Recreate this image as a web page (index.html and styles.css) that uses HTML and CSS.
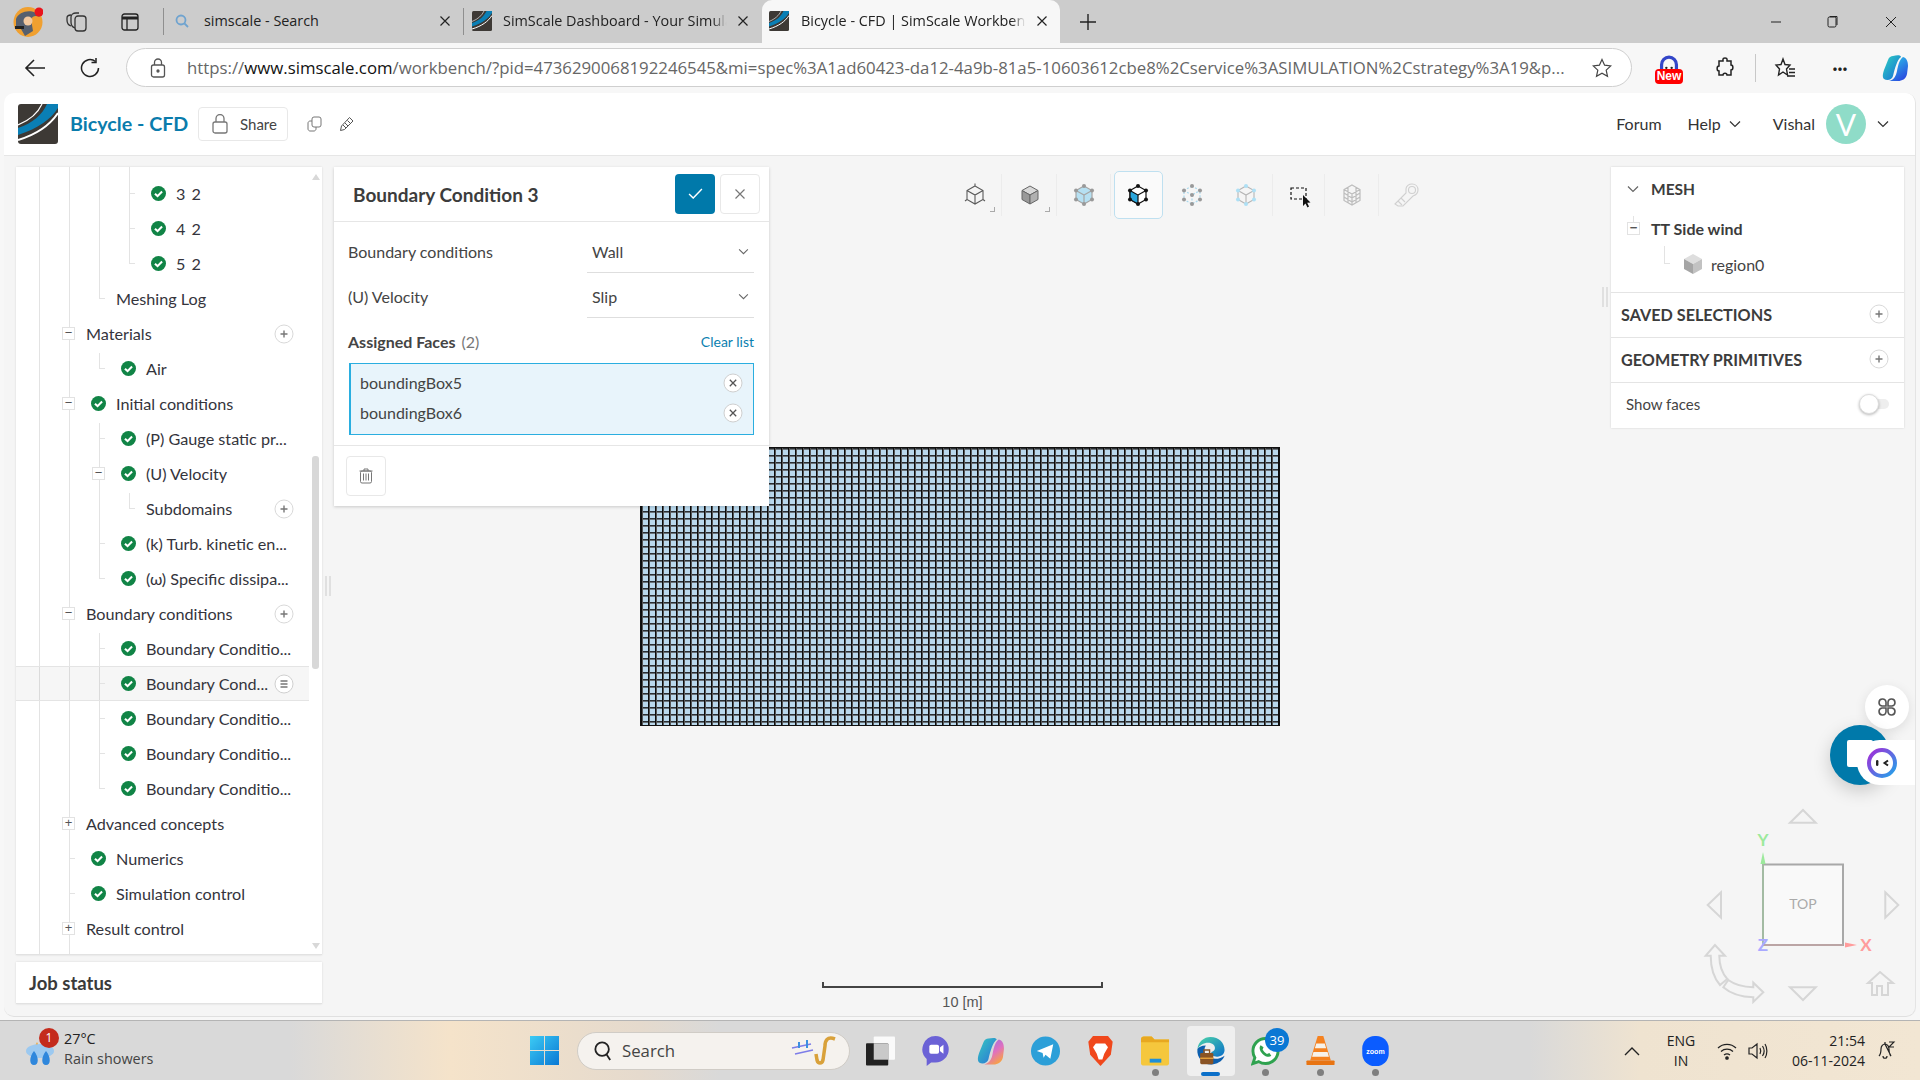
FILE: index.html
```html
<!DOCTYPE html>
<html lang="en">
<head>
    <meta charset="UTF-8">
    <title>Bicycle - CFD | SimScale Workbench</title>
    <link rel="stylesheet" href="styles.css">
</head>
<body>

    <!-- Shared icons -->
    <svg class="sprite" width="0" height="0">
        <symbol id="logo" viewBox="0 0 40 40">
            <rect width="40" height="40" rx="3" fill="#3d3935"/>
            <path d="M29 0H40V4C33 15 21 24 0 31V24C15 19 24 11 29 0Z" fill="#0a7fb5"/>
            <path d="M24 0C20 9 12 16 0 21" stroke="#fff" stroke-width="1.2" fill="none"/>
            <path d="M40 9C32 21 20 30 0 36" stroke="#fff" stroke-width="2" fill="none"/>
        </symbol>
        <symbol id="check" viewBox="0 0 16 16">
            <circle cx="8" cy="8" r="8" fill="#118446"/>
            <path d="M4.2 8.2L7 10.8L11.8 5.8" stroke="#fff" stroke-width="2.2" fill="none"/>
        </symbol>
        <symbol id="plus" viewBox="0 0 20 20">
            <circle cx="10" cy="10" r="9" fill="#fff" stroke="#d9d9d9"/>
            <path d="M6.5 10H13.5M10 6.5V13.5" stroke="#777" stroke-width="1.4"/>
        </symbol>
        <symbol id="chev" viewBox="0 0 12 8">
            <path d="M1 1.5L6 6.5L11 1.5" stroke="currentColor" stroke-width="1.2" fill="none"/>
        </symbol>
        <symbol id="close" viewBox="0 0 12 12">
            <path d="M1.5 1.5L10.5 10.5M10.5 1.5L1.5 10.5" stroke="currentColor" stroke-width="1.2"/>
        </symbol>
        <symbol id="chip-x" viewBox="0 0 20 20">
            <circle cx="10" cy="10" r="9" fill="#fff" stroke="#cfcfcf"/>
            <path d="M6.8 6.8L13.2 13.2M13.2 6.8L6.8 13.2" stroke="#555" stroke-width="1.3"/>
        </symbol>
    </svg>

    <!-- Browser tabs -->
    <div class="tabstrip">
        <svg class="profile" viewBox="0 0 30 30">
            <ellipse cx="15" cy="15" rx="14.5" ry="15" fill="#f0a030"/>
            <path d="M3 12C6 3 22 1 27 10C22 8 20 9 18 12L20 24L12 29L8 22L3 20Z" fill="#57606e"/>
            <circle cx="15" cy="14" r="4.5" fill="#f3c9a0"/>
            <rect x="2" y="19" width="9" height="3" fill="#222"/>
            <circle cx="26" cy="5" r="4.5" fill="#e8141c"/>
        </svg>
        <svg class="strip-icon collections" viewBox="0 0 22 20" fill="none" stroke="#333" stroke-width="1.3">
            <rect x="9" y="4" width="11" height="15" rx="3"/>
            <path d="M9 16C6 15 5 13 5 10V5C5 3 7 1 10 1H13"/>
            <path d="M5 14C2 13 1 11 1 8V6C1 4 3 3 5 3"/>
        </svg>
        <svg class="strip-icon vertical" viewBox="0 0 18 18" fill="none" stroke="#222" stroke-width="1.3">
            <rect x="1" y="1" width="16" height="16" rx="2.5"/>
            <path d="M1 5H17" stroke-width="3"/>
            <path d="M6 5V17"/>
        </svg>
        <div class="tab first">
            <svg class="tab-fav" viewBox="0 0 14 14" fill="none" stroke="#6fa3cf" stroke-width="1.8">
                <circle cx="6" cy="6" r="4.5"/><path d="M9.5 9.5L13 13"/>
            </svg>
            <span class="tab-title">simscale - Search</span>
            <svg class="tab-x"><use href="#close"/></svg>
        </div>
        <div class="tab second">
            <svg class="tab-logo"><use href="#logo"/></svg>
            <span class="tab-title fade">SimScale Dashboard - Your Simula</span>
            <svg class="tab-x"><use href="#close"/></svg>
        </div>
        <div class="tab active">
            <svg class="tab-logo"><use href="#logo"/></svg>
            <span class="tab-title fade">Bicycle - CFD | SimScale Workbenc</span>
            <svg class="tab-x"><use href="#close"/></svg>
        </div>
        <svg class="new-tab" viewBox="0 0 18 18"><path d="M9 1V17M1 9H17" stroke="#222" stroke-width="1.4"/></svg>
        <div class="win-controls">
            <svg viewBox="0 0 12 12"><path d="M1 6H11" stroke="#222"/></svg>
            <svg viewBox="0 0 12 12" fill="none" stroke="#222"><rect x="2" y="1" width="8" height="10" rx="1.5"/><path d="M4 1V0.5H11V9"/></svg>
            <svg viewBox="0 0 12 12"><path d="M1 1L11 11M11 1L1 11" stroke="#222"/></svg>
        </div>
    </div>

    <!-- Address bar -->
    <div class="addressbar">
        <svg class="nav-icon back" viewBox="0 0 22 20" fill="none" stroke="#222" stroke-width="1.6"><path d="M21 10H2M10 2L2 10L10 18"/></svg>
        <svg class="nav-icon reload" viewBox="0 0 20 20" fill="none" stroke="#222" stroke-width="1.5"><path d="M15.5 3.5A8.5 8.5 0 1 0 18.5 10"/><path d="M16 0V4.5H11.5"/></svg>
        <div class="urlbar">
            <svg class="url-lock" viewBox="0 0 16 20" fill="none" stroke="#555" stroke-width="1.3">
                <rect x="1.5" y="7" width="13" height="12" rx="2"/><path d="M4.5 7V4.5A3.5 3.5 0 0 1 11.5 4.5V7"/><circle cx="8" cy="13" r="1" fill="#555"/>
            </svg>
            <span class="url-text">https://<b>www.simscale.com</b>/workbench/?pid=4736290068192246545&amp;mi=spec%3A1ad60423-da12-4a9b-81a5-10603612cbe8%2Cservice%3ASIMULATION%2Cstrategy%3A19&amp;p...</span>
            <svg class="url-star" viewBox="0 0 20 20" fill="none" stroke="#444" stroke-width="1.2"><path d="M10 1.5L12.6 7.2L18.8 7.9L14.2 12.1L15.5 18.3L10 15.2L4.5 18.3L5.8 12.1L1.2 7.9L7.4 7.2Z"/></svg>
        </div>
        <div class="ext-new">
            <svg viewBox="0 0 20 16"><path d="M3 16V10A7 7 0 0 1 17 10V16" stroke="#3346c8" stroke-width="3" fill="none"/><circle cx="7.5" cy="13" r="1.1" fill="#222"/><circle cx="12.5" cy="13" r="1.1" fill="#222"/></svg>
            <span class="ext-badge">New</span>
        </div>
        <svg class="bar-icon puzzle" viewBox="0 0 20 22" fill="none" stroke="#222" stroke-width="1.5"><path d="M8 2C8 0.5 12 0.5 12 2V4H16V8C18.5 8 18.5 13 16 13V18H12C12 15.5 8 15.5 8 18H4V14C1.5 14 1.5 9 4 9V4H8Z"/></svg>
        <span class="bar-sep"></span>
        <svg class="bar-icon favs" viewBox="0 0 22 22" fill="none" stroke="#222" stroke-width="1.4"><path d="M9 2L11 7.5L16 8L12.5 12L13.5 18L9 15L4.5 18L5.5 12L2 8L7 7.5Z"/><path d="M15 12H21M15 15.5H21M13 19H21"/></svg>
        <span class="bar-dots">···</span>
        <svg class="copilot" viewBox="0 0 28 28">
            <defs>
                <linearGradient id="cp1" x1="0" y1="0" x2="1" y2="1"><stop offset="0" stop-color="#2ed3c0"/><stop offset="1" stop-color="#1468d8"/></linearGradient>
                <linearGradient id="cp2" x1="0" y1="0" x2="0.6" y2="1"><stop offset="0" stop-color="#2bd0e8"/><stop offset="1" stop-color="#2a4fe0"/></linearGradient>
            </defs>
            <path d="M12 2C16 1 20 1 20 3C16 6 14 14 12 22C11 26 6 27 3 25C1 23 2 19 3 16L7 6C8 3 10 2 12 2Z" fill="url(#cp1)"/>
            <path d="M22 3C26 4 27 8 27 12L26 20C25 25 21 27 17 27H8C13 26 15 22 16 17C17 12 18 6 22 3Z" fill="url(#cp2)"/>
        </svg>
    </div>

    <div class="app">

        <!-- App header -->
        <header class="app-header">
            <svg class="app-logo"><use href="#logo"/></svg>
            <h1 class="project-name">Bicycle - CFD</h1>
            <button class="share-btn">
                <svg viewBox="0 0 16 20" fill="none" stroke="#777" stroke-width="1.3"><rect x="1" y="8" width="14" height="11" rx="2"/><path d="M4 8V4.5A4 4 0 0 1 12 4.5V8"/></svg>
                Share
            </button>
            <svg class="head-icon copy" viewBox="0 0 15 16" fill="none" stroke="#777"><rect x="5" y="1" width="9" height="10" rx="2"/><path d="M5 5H3C2 5 1 6 1 7V13C1 14 2 15 3 15H7C8 15 9 14 9 13V11"/></svg>
            <svg class="head-icon pencil" viewBox="0 0 15 16" fill="none" stroke="#555"><path d="M1.5 14.5L2.5 10L10.5 1.5L14 5L5.5 13.5Z"/><path d="M4 9L7 12M6 7L9 10M8.5 4.5L11.5 7.5"/></svg>
            <nav class="head-nav">
                <span class="nav-forum">Forum</span>
                <span class="nav-help">Help<svg><use href="#chev"/></svg></span>
                <span class="nav-user">Vishal</span>
                <span class="avatar">V</span>
                <svg class="avatar-chev"><use href="#chev"/></svg>
            </nav>
        </header>

        <div class="workspace">

            <!-- Mesh in the viewer, behind the panels -->
            <div class="mesh"></div>

            <!-- Left column -->
            <div class="left-col">
                <div class="tree">
                    <i class="guide g-a"></i>
                    <i class="guide g-b"></i>
                    <i class="guide g-c1"></i>
                    <i class="guide g-c2"></i>
                    <i class="guide g-c3"></i>
                    <i class="guide g-c4"></i>
                    <i class="guide g-d1"></i>
                    <i class="guide g-d2"></i>

                    <div class="row l2 tick"><span class="slot"></span><svg class="chk"><use href="#check"/></svg><span class="lbl spaced">3 2</span></div>
                    <div class="row l2 tick"><span class="slot"></span><svg class="chk"><use href="#check"/></svg><span class="lbl spaced">4 2</span></div>
                    <div class="row l2 tick"><span class="slot"></span><svg class="chk"><use href="#check"/></svg><span class="lbl spaced">5 2</span></div>
                    <div class="row l1 tick"><span class="slot"></span><span class="lbl">Meshing Log</span></div>
                    <div class="row l0"><span class="slot box">−</span><span class="lbl">Materials</span><svg class="act"><use href="#plus"/></svg></div>
                    <div class="row l1 tick"><span class="slot"></span><svg class="chk"><use href="#check"/></svg><span class="lbl">Air</span></div>
                    <div class="row l0"><span class="slot box">−</span><svg class="chk"><use href="#check"/></svg><span class="lbl">Initial conditions</span></div>
                    <div class="row l1 tick"><span class="slot"></span><svg class="chk"><use href="#check"/></svg><span class="lbl">(P) Gauge static pr...</span></div>
                    <div class="row l1"><span class="slot box">−</span><svg class="chk"><use href="#check"/></svg><span class="lbl">(U) Velocity</span></div>
                    <div class="row l2 tick"><span class="slot"></span><span class="lbl">Subdomains</span><svg class="act"><use href="#plus"/></svg></div>
                    <div class="row l1 tick"><span class="slot"></span><svg class="chk"><use href="#check"/></svg><span class="lbl">(k) Turb. kinetic en...</span></div>
                    <div class="row l1 tick"><span class="slot"></span><svg class="chk"><use href="#check"/></svg><span class="lbl">(ω) Specific dissipa...</span></div>
                    <div class="row l0"><span class="slot box">−</span><span class="lbl">Boundary conditions</span><svg class="act"><use href="#plus"/></svg></div>
                    <div class="row l1 tick"><span class="slot"></span><svg class="chk"><use href="#check"/></svg><span class="lbl">Boundary Conditio...</span></div>
                    <div class="row l1 tick selected"><span class="slot"></span><svg class="chk"><use href="#check"/></svg><span class="lbl">Boundary Cond...</span>
                        <svg class="act" viewBox="0 0 20 20"><circle cx="10" cy="10" r="9" fill="#fff" stroke="#d0d0d0"/><path d="M6.5 7H13.5M6.5 10H13.5M6.5 13H13.5" stroke="#777" stroke-width="1.3"/></svg>
                    </div>
                    <div class="row l1 tick"><span class="slot"></span><svg class="chk"><use href="#check"/></svg><span class="lbl">Boundary Conditio...</span></div>
                    <div class="row l1 tick"><span class="slot"></span><svg class="chk"><use href="#check"/></svg><span class="lbl">Boundary Conditio...</span></div>
                    <div class="row l1 tick"><span class="slot"></span><svg class="chk"><use href="#check"/></svg><span class="lbl">Boundary Conditio...</span></div>
                    <div class="row l0"><span class="slot box">+</span><span class="lbl">Advanced concepts</span></div>
                    <div class="row l0 tick"><span class="slot"></span><svg class="chk"><use href="#check"/></svg><span class="lbl">Numerics</span></div>
                    <div class="row l0 tick"><span class="slot"></span><svg class="chk"><use href="#check"/></svg><span class="lbl">Simulation control</span></div>
                    <div class="row l0"><span class="slot box">+</span><span class="lbl">Result control</span></div>

                    <span class="scroll-up"></span>
                    <span class="scroll-thumb"></span>
                    <span class="scroll-down"></span>
                </div>
                <div class="job-status">Job status</div>
            </div>

            <!-- Drag handle -->
            <span class="handle left-handle"></span>

            <!-- Boundary condition panel -->
            <section class="bc-panel">
                <div class="bc-head">
                    <h2>Boundary Condition 3</h2>
                    <button class="btn-ok"><svg viewBox="0 0 16 12" fill="none" stroke="#fff" stroke-width="1.5"><path d="M1 6.5L5.5 11L15 1"/></svg></button>
                    <button class="btn-close"><svg><use href="#close"/></svg></button>
                </div>
                <div class="bc-body">
                    <div class="field">
                        <label>Boundary conditions</label>
                        <div class="select">Wall<svg><use href="#chev"/></svg></div>
                    </div>
                    <div class="field">
                        <label>(U) Velocity</label>
                        <div class="select">Slip<svg><use href="#chev"/></svg></div>
                    </div>
                    <div class="faces-head">
                        <span class="faces-title">Assigned Faces</span>
                        <span class="faces-count">(2)</span>
                        <a class="clear-list">Clear list</a>
                    </div>
                    <div class="faces-list">
                        <div class="face">boundingBox5<svg><use href="#chip-x"/></svg></div>
                        <div class="face">boundingBox6<svg><use href="#chip-x"/></svg></div>
                    </div>
                </div>
                <div class="bc-foot">
                    <button class="btn-trash">
                        <svg viewBox="0 0 14 16" fill="none" stroke="#777"><path d="M0.5 3H13.5M5 3V1H9V3"/><rect x="1.5" y="3" width="11" height="12" rx="1.5"/><path d="M4.5 5.5V12.5M7 5.5V12.5M9.5 5.5V12.5"/></svg>
                    </button>
                </div>
            </section>

            <!-- Viewer toolbar -->
            <div class="viewer">
                <div class="toolbar">
                    <div class="tool sep corner">
                        <svg viewBox="0 0 30 30" fill="none" stroke="#5a5a5a" stroke-width="1.1"><path d="M15 6L23 10.5V19.5L15 24L7 19.5V10.5ZM7 10.5L15 15L23 10.5M15 15V24M15 6V3.5M23 19.5L25 21M7 19.5L5 21"/></svg>
                    </div>
                    <div class="tool sep corner">
                        <svg viewBox="0 0 30 30" stroke="#666" stroke-width="1"><path d="M15 6L23 10.5L15 15L7 10.5Z" fill="#d8d8d8"/><path d="M7 10.5L15 15V24L7 19.5Z" fill="#999"/><path d="M23 10.5L15 15V24L23 19.5Z" fill="#b0b0b0"/></svg>
                    </div>
                    <div class="tool sep">
                        <svg viewBox="0 0 30 30" stroke="#a5a5a5" stroke-width="1.2"><path d="M15 6L23 10.5V19.5L15 24L7 19.5V10.5Z" fill="#b6e0f2"/><path d="M7 10.5L15 15L23 10.5M15 15V24" fill="none"/><g fill="#999" stroke="none"><circle cx="15" cy="6" r="2"/><circle cx="23" cy="10.5" r="2"/><circle cx="23" cy="19.5" r="2"/><circle cx="15" cy="24" r="2"/><circle cx="7" cy="19.5" r="2"/><circle cx="7" cy="10.5" r="2"/></g></svg>
                    </div>
                    <div class="tool on">
                        <svg viewBox="0 0 30 30" stroke="#111" stroke-width="1.2"><path d="M15 6L23 10.5V19.5L15 24L7 19.5V10.5Z" fill="#fff"/><path d="M7 10.5L15 15V24L7 19.5Z" fill="#2ba6dc"/><path d="M15 15L23 10.5" fill="none"/><g fill="#111" stroke="none"><circle cx="15" cy="6" r="2"/><circle cx="23" cy="10.5" r="2"/><circle cx="23" cy="19.5" r="2"/><circle cx="15" cy="24" r="2"/><circle cx="7" cy="19.5" r="2"/><circle cx="7" cy="10.5" r="2"/></g></svg>
                    </div>
                    <div class="tool">
                        <svg viewBox="0 0 30 30" fill="none" stroke="#a9d9ee" stroke-width="1.2" stroke-dasharray="2 1.5"><path d="M15 6L23 10.5V19.5L15 24L7 19.5V10.5ZM7 10.5L15 15L23 10.5M15 15V24"/><g fill="#999" stroke="none"><circle cx="15" cy="6" r="2"/><circle cx="23" cy="10.5" r="2"/><circle cx="23" cy="19.5" r="2"/><circle cx="15" cy="24" r="2"/><circle cx="7" cy="19.5" r="2"/><circle cx="7" cy="10.5" r="2"/><circle cx="15" cy="15" r="2"/></g></svg>
                    </div>
                    <div class="tool sep">
                        <svg viewBox="0 0 30 30" fill="none" stroke="#b5b5b5" stroke-width="1.1"><path d="M15 6L23 10.5V19.5L15 24L7 19.5V10.5ZM7 10.5L15 15L23 10.5M15 15V24"/><g fill="#aee0f5" stroke="none"><circle cx="15" cy="6" r="2"/><circle cx="23" cy="10.5" r="2"/><circle cx="23" cy="19.5" r="2"/><circle cx="15" cy="24" r="2"/><circle cx="7" cy="19.5" r="2"/><circle cx="7" cy="10.5" r="2"/></g></svg>
                    </div>
                    <div class="tool sep">
                        <svg viewBox="0 0 30 30"><rect x="7" y="8" width="15" height="11" fill="none" stroke="#111" stroke-width="1.2" stroke-dasharray="3 2"/><path d="M19 15V26L21.5 23.5L23.5 27.5L25 26.5L23.2 22.8L26.5 22.5Z" fill="#111"/></svg>
                    </div>
                    <div class="tool sep">
                        <svg viewBox="0 0 30 30" fill="none" stroke="#bdbdbd" stroke-width="1.2"><path d="M15 5L23 9.5V20.5L15 25L7 20.5V9.5ZM7 9.5L15 14L23 9.5M15 14V25M7 13L15 18L23 13M7 17L15 22L23 17M11 7.5V22.5M19 7.5V22.5"/></svg>
                    </div>
                    <div class="tool">
                        <svg viewBox="0 0 30 30" fill="none" stroke="#d0d0d0" stroke-width="1.1"><path d="M4 24L15 13V9C15 6 18 4 21 4C25 4 27 7 27 10C27 13 25 15 22 16L12 26H7Z"/><circle cx="21" cy="10" r="3.500"/><path d="M7 21L11 25M10 18L14 22"/></svg>
                    </div>
                </div>
                <div class="scale">
                    <span class="scale-bar"></span>
                    <span class="scale-text">10 [m]</span>
                </div>
            </div>

            <span class="handle right-handle"></span>

            <!-- Right panel -->
            <aside class="side">
                <div class="mesh-block">
                    <div class="mesh-title"><svg><use href="#chev"/></svg>MESH</div>
                    <div class="mesh-model"><span class="box">−</span>TT Side wind</div>
                    <div class="mesh-region">
                        <svg viewBox="0 0 18 20"><path d="M9 0L18 5L9 10L0 5Z" fill="#dedede"/><path d="M0 5L9 10V20L0 15Z" fill="#a5a5a5"/><path d="M18 5L9 10V20L18 15Z" fill="#c2c2c2"/></svg>
                        region0
                    </div>
                </div>
                <div class="side-row">SAVED SELECTIONS<svg><use href="#plus"/></svg></div>
                <div class="side-row">GEOMETRY PRIMITIVES<svg><use href="#plus"/></svg></div>
                <div class="side-toggle">Show faces<span class="toggle"></span></div>
            </aside>

            <!-- Floating buttons -->
            <div class="fab-apps">
                <svg viewBox="0 0 20 20" fill="none" stroke="#555" stroke-width="1.6"><path d="M9 9H5A3.5 3.5 0 1 1 9 5ZM11 9V5A3.5 3.5 0 1 1 15 9ZM9 11V15A3.5 3.5 0 1 1 5 11ZM11 11H15A3.5 3.5 0 1 1 11 15Z"/></svg>
            </div>
            <div class="fab-chat"><span class="fab-tile"></span></div>
            <div class="fab-bot">
                <svg viewBox="0 0 30 30">
                    <defs><linearGradient id="ring" x1="0" y1="0" x2="1" y2="1"><stop offset="0" stop-color="#a32bd8"/><stop offset="1" stop-color="#21a5ea"/></linearGradient></defs>
                    <circle cx="15" cy="15" r="13" fill="#fff" stroke="url(#ring)" stroke-width="4"/>
                    <rect x="9" y="12" width="2.4" height="6" rx="1.2" fill="#222"/>
                    <path d="M21 12.5L17.5 15L21 17.5" stroke="#222" stroke-width="2" fill="none"/>
                </svg>
            </div>

            <!-- View cube -->
            <svg class="navcube" viewBox="1680 800 236 216">
                <g fill="none" stroke="#d6d6d6" stroke-width="2">
                    <path d="M1790 822.7L1803 810L1815.7 822.7Z"/>
                    <path d="M1790 987.3H1815.7L1803 1000Z"/>
                    <path d="M1721 892.3L1707.7 905L1721 917.7Z"/>
                    <path d="M1885.3 892.3L1898.3 905L1885.3 917.7Z"/>
                    <path d="M1715 945L1705.7 955.7H1710.7C1710.7 968 1714 978 1720 985L1727.3 979C1722 973 1719.3 965 1719.3 955.7H1725Z"/>
                    <path d="M1763.3 992.3L1753.3 982.7V987.3C1743 987 1735 985 1728.3 980L1723.3 987.3C1731 994 1741 997 1753.3 997.3V1002Z"/>
                    <path d="M1868 983L1880 972L1893 983H1888V995H1882V986H1877V995H1872V983Z"/>
                </g>
                <rect x="1763" y="864.5" width="80" height="80.5" fill="#f9f9f9" stroke="#a8a8a8" stroke-width="2"/>
                <path d="M1763 864V945" stroke="#a3bba3" stroke-width="2"/>
                <path d="M1763 945H1843" stroke="#bba5a5" stroke-width="2"/>
                <path d="M1763 852L1760.5 864H1765.5Z" fill="#9ce99c"/>
                <path d="M1857 945L1845 942.5V947.5Z" fill="#ff9c9c"/>
                <text class="cube-top" x="1803" y="909">TOP</text>
                <text class="axis axis-y" x="1763" y="846">Y</text>
                <text class="axis axis-x" x="1866" y="951">X</text>
                <text class="axis axis-z" x="1763" y="951">Z</text>
            </svg>
        </div>
    </div>

    <!-- Windows taskbar -->
    <footer class="taskbar">
        <div class="weather">
            <svg class="weather-icon" viewBox="0 0 30 30">
                <path d="M2 14C5 14 10 12 12 6C15 12 14 19 7 19C5 19 3 17 2 14Z" fill="#f2a32a"/>
                <ellipse cx="15" cy="15" rx="14" ry="7" fill="#9cc9f0"/>
                <path d="M9 15C14 21 14 29 9 29C4 29 4 21 9 15ZM21 15C26 21 26 29 21 29C16 29 16 21 21 15Z" fill="#2f87dc"/>
            </svg>
            <span class="weather-badge">1</span>
            <div class="weather-text"><span>27°C</span><span>Rain showers</span></div>
        </div>
        <div class="tb-slot">
            <svg class="tb-win" viewBox="0 0 30 30">
                <defs><linearGradient id="win" x1="0" y1="0" x2="1" y2="1"><stop offset="0" stop-color="#3ccbf4"/><stop offset="1" stop-color="#0a78d4"/></linearGradient></defs>
                <path d="M0 0H14.5V14.5H0ZM15.5 0H30V14.5H15.5ZM0 15.5H14.5V30H0ZM15.5 15.5H30V30H15.5Z" fill="url(#win)"/>
            </svg>
        </div>
        <div class="tb-search">
            <svg class="tb-glass" viewBox="0 0 20 22" fill="none" stroke="#222" stroke-width="2"><circle cx="9" cy="9" r="7.5"/><path d="M14 15L18 21"/></svg>
            Search
            <svg class="tb-sax" viewBox="0 0 50 30">
                <path d="M3 12L22 8M6 18L24 14" stroke="#7d7de8" stroke-width="1.5" fill="none"/>
                <path d="M10 6V12M18 4V12" stroke="#3b8fe0" stroke-width="2"/>
                <path d="M46 3C38 0 36 5 36 10L34 24C33 28 29 28 28 24L27 18" stroke="#d9a13a" stroke-width="3.5" fill="none"/>
            </svg>
        </div>
        <div class="tb-slot">
            <svg class="tb-icon" viewBox="0 0 30 30"><rect x="8" y="0" width="22" height="24" rx="1" fill="#fafafa"/><rect x="0" y="7" width="23" height="23" rx="1" fill="#222"/><rect x="8" y="7" width="15" height="17" fill="#c9c9c9"/></svg>
        </div>
        <div class="tb-slot">
            <svg class="tb-icon" viewBox="0 0 30 34"><path d="M15 0A15 15 0 0 1 15 30H10L5 34V26A15 15 0 0 1 15 0Z" fill="#6b62d6"/><rect x="8" y="10" width="11" height="10" rx="2" fill="#fff"/><path d="M20 13L24 10V20L20 17Z" fill="#fff"/></svg>
        </div>
        <div class="tb-slot">
            <svg class="tb-icon" viewBox="0 0 28 28">
                <defs>
                    <linearGradient id="cq1" x1="0" y1="0" x2="1" y2="1"><stop offset="0" stop-color="#35c9c0"/><stop offset="1" stop-color="#2a6fd8"/></linearGradient>
                    <linearGradient id="cq2" x1="0" y1="0" x2="0.6" y2="1"><stop offset="0" stop-color="#8a6fe8"/><stop offset="0.6" stop-color="#e070c0"/><stop offset="1" stop-color="#f6a04a"/></linearGradient>
                </defs>
                <path d="M12 2C16 1 20 1 20 3C16 6 14 14 12 22C11 26 6 27 3 25C1 23 2 19 3 16L7 6C8 3 10 2 12 2Z" fill="url(#cq1)"/>
                <path d="M22 3C26 4 27 8 27 12L26 20C25 25 21 27 17 27H8C13 26 15 22 16 17C17 12 18 6 22 3Z" fill="url(#cq2)"/>
            </svg>
        </div>
        <div class="tb-slot">
            <svg class="tb-icon" viewBox="0 0 30 30"><circle cx="15" cy="15" r="15" fill="#2c9fd8"/><path d="M6 15L23 8L20 23L15 19L13 22L12 17Z" fill="#fff"/></svg>
        </div>
        <div class="tb-slot">
            <svg class="tb-icon" viewBox="0 0 30 32"><path d="M7 0H23L28 6L26 20L15 32L4 20L2 6Z" fill="#f0481c"/><path d="M10 8H20L23 12L19 19L17 25H13L11 19L7 12Z" fill="#fff"/></svg>
        </div>
        <div class="tb-slot dot">
            <svg class="tb-icon" viewBox="0 0 30 30"><path d="M0 3C0 1 1 0 3 0H11L14 3H29V28C29 29 28 30 27 30H2C1 30 0 29 0 28Z" fill="#f5c73d"/><path d="M0 3C0 1 1 0 3 0H11L14 3H29V6H0Z" fill="#e8a820"/><rect x="9" y="23" width="12" height="4" fill="#1f8fd8"/></svg>
        </div>
        <div class="tb-slot edge">
            <svg class="tb-icon" viewBox="0 0 30 32">
                <defs><linearGradient id="edge" x1="0" y1="0" x2="1" y2="1"><stop offset="0" stop-color="#4dd6a8"/><stop offset="1" stop-color="#0a6fc9"/></linearGradient></defs>
                <path d="M15 1C24 1 30 7 30 15C30 19 27 22 22 22C18 22 15 20 16 17C20 16 21 12 18 9C13 5 4 8 1 14C2 6 8 1 15 1Z" fill="url(#edge)"/>
                <path d="M1 14C0 24 9 32 18 30C24 29 28 26 30 21C24 26 14 25 10 20C8 17 8 13 10 10C5 10 2 12 1 14Z" fill="#0d5fae"/>
                <rect x="4" y="18" width="14" height="12" rx="1.5" fill="#8a5424"/><rect x="4" y="23" width="14" height="1.5" fill="#e8a23a"/><path d="M8 18V15H14V18" fill="none" stroke="#8a5424" stroke-width="1.5"/>
            </svg>
        </div>
        <div class="tb-slot dot">
            <svg class="tb-icon" viewBox="0 0 30 30"><path d="M15 2A13 13 0 0 1 15 28C12.500 28 10 27.300 8 26L2 28L4 22C2.700 20 2 17.500 2 15A13 13 0 0 1 15 2Z" fill="#fff" stroke="#2fa24f" stroke-width="3"/><path d="M10 9C8 11 9 15 12 18C15 21 19 22 21 20L19 17L16.500 18C14.500 17 13 15.500 12 13.500L13 11Z" fill="#2fa24f"/></svg>
            <span class="wa-badge">39</span>
        </div>
        <div class="tb-slot dot">
            <svg class="tb-icon" viewBox="0 0 30 32"><path d="M12 0H18L26 26H4Z" fill="#f58220"/><path d="M10.500 8H19.500L21 13H9ZM7.500 17H22.500L24 22H6Z" fill="#f7f2ea"/><rect x="0" y="26" width="30" height="5" rx="1" fill="#e87412"/></svg>
        </div>
        <div class="tb-slot dot">
            <svg class="tb-icon" viewBox="0 0 30 34"><rect width="30" height="34" rx="14" fill="#0b5cff"/><text class="zoom-word" x="15" y="20">zoom</text></svg>
        </div>
        <div class="tray">
            <svg class="tray-chev" viewBox="0 0 16 10" fill="none" stroke="#222" stroke-width="1.4"><path d="M1 9L8 2L15 9"/></svg>
            <div class="tray-lang"><span>ENG</span><span>IN</span></div>
            <svg class="tray-wifi" viewBox="0 0 20 18" fill="none" stroke="#222" stroke-width="1.3"><path d="M1 6A13 13 0 0 1 19 6M4 9.500A9 9 0 0 1 16 9.500M7 13A5 5 0 0 1 13 13"/><circle cx="10" cy="16" r="1.2" fill="#222"/></svg>
            <svg class="tray-vol" viewBox="0 0 20 20" fill="none" stroke="#222" stroke-width="1.2"><path d="M1 7H4L9 3V17L4 13H1ZM12 7C13 9 13 11 12 13M14.500 5C16.500 8 16.500 12 14.500 15M17 3C19.500 7 19.500 13 17 17"/></svg>
            <div class="tray-clock"><span>21:54</span><span>06-11-2024</span></div>
            <svg class="tray-bell" viewBox="0 0 20 22" fill="none" stroke="#222" stroke-width="1.2"><path d="M3 16C5 14 5 12 5 9C5 6 7 4 9 4V2M9 4C11 4 13 6 13 9C13 12 13 14 15 16ZM7 16C7 19 11 19 11 16"/><path d="M13 2H18L13 7H18" stroke-width="1.1"/></svg>
        </div>
    </footer>

</body>
</html>
```

FILE: styles.css
```css
/* General page */
body {
    margin: 0;
    width: 1920px;
    height: 1080px;
    overflow: hidden;
    display: flex;
    flex-direction: column;
    background-color: #f7f7f7;
    color: #333;
    font-family: Lato, sans-serif;
}

button {
    padding: 0;
    background: none;
    font: inherit;
}

h1, h2 {
    margin: 0;
}

.sprite {
    position: absolute;
}

/* Browser tabs */
.tabstrip {
    height: 43px;
    flex: none;
    display: flex;
    align-items: center;
    background-color: #cccccc;
    font-family: "Open Sans", sans-serif;
    font-size: 14.4px;
    color: #222;
}

.profile {
    width: 30px;
    height: 30px;
    margin-left: 13px;
}

.strip-icon {
    height: 20px;
}

.collections {
    width: 22px;
    margin-left: 23px;
}

.vertical {
    width: 18px;
    margin-left: 33px;
    margin-right: 25px;
}

.tab {
    width: 298px;
    height: 43px;
    margin-right: 1px;
    box-sizing: border-box;
    display: flex;
    align-items: center;
    padding-left: 8px;
    padding-bottom: 1px;
    position: relative;
}

.tab.first {
    border-left: 1px solid #8f8f8f;
    border-image: linear-gradient(transparent 9px, #8f8f8f 9px, #8f8f8f 34px, transparent 34px) 1;
    padding-left: 11px;
    margin-left: -1px;
    width: 299px;
}

.tab.second {
    border-left: 1px solid #8f8f8f;
    border-image: linear-gradient(transparent 9px, #8f8f8f 9px, #8f8f8f 34px, transparent 34px) 1;
}

.tab.active {
    background-color: #f7f7f7;
    border-radius: 10px 10px 0 0;
    padding-left: 7px;
}

.tab-fav {
    width: 14px;
    height: 14px;
    margin-right: 15px;
}

.tab-logo {
    width: 20px;
    height: 20px;
    margin-right: 12px;
    flex: none;
}

.tab.second .tab-logo {
    margin-right: 11px;
}

.tab-title {
    width: 234px;
    white-space: nowrap;
    padding-bottom: 2px;
}

.tab.second .tab-title {
    width: 233px;
}

.tab-title.fade {
    -webkit-mask-image: linear-gradient(90deg, #000 90%, transparent 96%);
    mask-image: linear-gradient(90deg, #000 90%, transparent 96%);
}

.tab-x {
    width: 12px;
    height: 12px;
    margin-left: 1px;
    color: #222;
    flex: none;
}

.new-tab {
    width: 18px;
    height: 18px;
    margin-left: 18px;
}

.win-controls {
    margin-left: auto;
    margin-right: 23px;
    display: flex;
    gap: 44px;
}

.win-controls svg {
    width: 12px;
    height: 12px;
}

.win-controls svg:nth-child(2) {
    margin-right: 3px;
}

/* Address bar */
.addressbar {
    height: 50px;
    flex: none;
    display: flex;
    align-items: center;
    background-color: #f7f7f7;
    padding-bottom: 1px;
    box-sizing: border-box;
}

.nav-icon {
    flex: none;
}

.back {
    width: 22px;
    height: 20px;
    margin-left: 24px;
}

.reload {
    width: 20px;
    height: 20px;
    margin-left: 34px;
}

.urlbar {
    width: 1506px;
    height: 39px;
    margin-left: 26px;
    box-sizing: border-box;
    flex: none;
    display: flex;
    align-items: center;
    background-color: #fff;
    border: 1px solid #cfcfcf;
    border-radius: 20px;
    font-family: "Open Sans", sans-serif;
    font-size: 16.8px;
    color: #666;
}

.urlbar b {
    font-weight: 400;
    color: #111;
}

.url-lock {
    width: 16px;
    height: 20px;
    margin-left: 23px;
    flex: none;
}

.url-text {
    width: 1384px;
    margin-left: 21px;
    white-space: nowrap;
    flex: none;
}

.url-star {
    width: 20px;
    height: 20px;
    margin-left: 21px;
    flex: none;
}

.ext-new {
    width: 28px;
    height: 31px;
    margin-left: 23px;
    margin-top: 3px;
    flex: none;
    display: flex;
    flex-direction: column;
    align-items: center;
}

.ext-new svg {
    width: 22px;
    height: 17px;
    flex: none;
}

.ext-badge {
    margin-top: -2px;
    width: 28px;
    background-color: #f00;
    border-radius: 4px;
    color: #fff;
    font-size: 12px;
    font-weight: 700;
    line-height: 15px;
    text-align: center;
    font-family: "Liberation Sans", sans-serif;
}

.bar-icon {
    flex: none;
}

.puzzle {
    width: 20px;
    height: 22px;
    margin-left: 32px;
}

.bar-sep {
    width: 1px;
    height: 28px;
    margin-left: 20px;
    background-color: #c8c8c8;
}

.favs {
    width: 22px;
    height: 22px;
    margin-left: 18px;
}

.bar-dots {
    width: 20px;
    margin-left: 34px;
    font-size: 18px;
    font-weight: 700;
    color: #222;
    text-align: center;
}

.copilot {
    width: 28px;
    height: 28px;
    margin-left: 31px;
    flex: none;
}

/* App card */
.app {
    height: 924px;
    margin: 0 4px;
    flex: none;
    display: flex;
    flex-direction: column;
    background-color: #f5f5f5;
    border-radius: 10px;
    border-bottom: 1px solid #e0e0e0;
    border-right: 1px solid #e4e4e4;
    box-sizing: border-box;
    overflow: hidden;
}

.app-header {
    height: 63px;
    flex: none;
    box-sizing: border-box;
    display: flex;
    align-items: center;
    background-color: #fff;
    border-bottom: 1px solid #e6e6e6;
    padding-left: 14px;
    padding-bottom: 1px;
}

.app-logo {
    width: 40px;
    height: 40px;
    margin-right: 12px;
}

.project-name {
    width: 128px;
    font-size: 19.7px;
    font-weight: 700;
    color: #0a7cac;
    white-space: nowrap;
}

.share-btn {
    width: 90px;
    height: 34px;
    box-sizing: border-box;
    display: flex;
    align-items: center;
    gap: 12px;
    padding-left: 13px;
    border: 1px solid #e8e8e8;
    border-radius: 4px;
    background-color: #fff;
    font-size: 15px;
    color: #444;
}

.share-btn svg {
    width: 16px;
    height: 20px;
}

.head-icon {
    width: 15px;
    height: 16px;
}

.copy {
    margin-left: 19px;
}

.pencil {
    margin-left: 17px;
}

.head-nav {
    margin-left: auto;
    display: flex;
    align-items: center;
    font-size: 16px;
    color: #333;
}

.nav-help {
    margin-left: 26px;
    display: flex;
    align-items: center;
    gap: 8px;
}

.nav-help svg {
    width: 12px;
    height: 8px;
}

.nav-user {
    margin-left: 32px;
}

.avatar {
    width: 40px;
    height: 40px;
    margin-left: 11px;
    border-radius: 50%;
    background-color: #8fdcc8;
    color: #fff;
    font-size: 30px;
    line-height: 40px;
    text-align: center;
}

.avatar-chev {
    width: 12px;
    height: 8px;
    margin-left: 11px;
    margin-right: 26px;
}

/* Workspace */
.workspace {
    flex: 1;
    position: relative;
    display: flex;
    align-items: flex-start;
    padding: 11px 0 0 12px;
    min-height: 0;
}

.mesh {
    position: absolute;
    left: 636px;
    top: 291px;
    width: 640px;
    height: 279px;
    box-sizing: border-box;
    border: 1px solid #111;
    background-color: #b9d8ec;
    background-image:
        linear-gradient(90deg, #0c0c0c 1px, #555 1px, #555 2px, transparent 2px),
        linear-gradient(180deg, #2a2e32 1px, #6a7278 1px, #6a7278 2px, transparent 2px);
    background-size: 7px 7px;
}

/* Left column */
.left-col {
    width: 306px;
    flex: none;
    display: flex;
    flex-direction: column;
    gap: 7px;
    position: relative;
}

.tree {
    height: 788px;
    box-sizing: border-box;
    padding-top: 9px;
    position: relative;
    overflow: hidden;
    background-color: #fff;
    border-bottom: 1px solid #e2e2e2;
    box-shadow: 0 0 2px rgba(0, 0, 0, 0.12);
}

.guide {
    position: absolute;
    width: 1px;
    background-color: #e3e3e3;
}

.g-a { left: 23px; top: 0; bottom: 0; }
.g-b { left: 53px; top: 0; bottom: 0; }
.g-c1 { left: 83px; top: 0; height: 132px; }
.g-c2 { left: 83px; top: 186px; height: 16px; }
.g-c3 { left: 83px; top: 256px; height: 156px; }
.g-c4 { left: 83px; top: 466px; height: 156px; }
.g-d1 { left: 113px; top: 0; height: 97px; }
.g-d2 { left: 113px; top: 326px; height: 16px; }

.row {
    width: 293px;
    height: 35px;
    box-sizing: border-box;
    padding-right: 16px;
    display: flex;
    align-items: center;
    position: relative;
    font-size: 16.2px;
    color: #34343c;
    white-space: nowrap;
}

.row.l0 { padding-left: 47px; }
.row.l1 { padding-left: 77px; }
.row.l2 { padding-left: 107px; }

.row.tick::before {
    content: "";
    position: absolute;
    top: 17px;
    width: 5px;
    height: 1px;
    background-color: #e3e3e3;
}

.row.l0.tick::before { left: 54px; }
.row.l1.tick::before { left: 84px; }
.row.l2.tick::before { left: 114px; }

.row.selected {
    background-color: rgba(0, 0, 0, 0.035);
    box-shadow: inset 0 1px #e4e4e4, inset 0 -1px #e4e4e4;
}

.slot {
    width: 23px;
    flex: none;
}

.box {
    width: 13px;
    height: 13px;
    box-sizing: border-box;
    display: inline-block;
    border: 1px solid #e2e2e2;
    background-color: #fff;
    font-family: "Liberation Sans", sans-serif;
    font-size: 13px;
    line-height: 10px;
    text-align: center;
    color: #555;
    flex: none;
    position: relative;
}

.row .box {
    margin-left: -1px;
    margin-right: 11px;
}

.chk {
    width: 15px;
    height: 15px;
    margin-left: 5px;
    margin-right: 10px;
    flex: none;
    position: relative;
}

.lbl.spaced {
    word-spacing: 1px;
    letter-spacing: 0.5px;
}

.act {
    width: 20px;
    height: 20px;
    margin-left: auto;
    flex: none;
    margin-right: -1px;
}

.scroll-up,
.scroll-down {
    position: absolute;
    left: 296px;
    width: 0;
    height: 0;
    border-left: 4.500px solid transparent;
    border-right: 4.500px solid transparent;
}

.scroll-up {
    top: 7px;
    border-bottom: 6px solid #d8d8d8;
}

.scroll-down {
    bottom: 5px;
    border-top: 6px solid #d8d8d8;
}

.scroll-thumb {
    position: absolute;
    left: 296px;
    top: 289px;
    width: 7px;
    height: 213px;
    border-radius: 3px;
    background-color: #d8d8d8;
}

.job-status {
    height: 42px;
    box-sizing: border-box;
    padding-left: 13px;
    background-color: #fff;
    border-bottom: 1px solid #e2e2e2;
    box-shadow: 0 0 2px rgba(0, 0, 0, 0.12);
    font-size: 18.5px;
    font-weight: 700;
    line-height: 42px;
    color: #3a3a3a;
}

/* Drag handles */
.handle {
    position: absolute;
    width: 2px;
    height: 20px;
    border-left: 2px solid #e0e0e0;
    border-right: 2px solid #e0e0e0;
}

.left-handle {
    left: 321px;
    top: 420px;
}

.right-handle {
    left: 1598px;
    top: 131px;
}

/* Boundary condition panel */
.bc-panel {
    width: 435px;
    height: 339px;
    margin-left: 12px;
    flex: none;
    position: relative;
    box-sizing: border-box;
    background-color: #fff;
    box-shadow: 0 1px 3px rgba(0, 0, 0, 0.18);
    font-size: 15px;
    color: #444;
}

.bc-head {
    height: 55px;
    box-sizing: border-box;
    display: flex;
    align-items: center;
    padding-left: 19px;
    padding-right: 9px;
    border-bottom: 1px solid #e6e6e6;
}

.bc-head h2 {
    flex: 1;
    font-size: 19px;
    font-weight: 700;
    color: #3c3c3c;
    white-space: nowrap;
}

.btn-ok,
.btn-close {
    width: 40px;
    height: 40px;
    box-sizing: border-box;
    display: flex;
    align-items: center;
    justify-content: center;
    border-radius: 4px;
    margin-top: -1px;
}

.btn-ok {
    border: none;
    background-color: #0079aa;
}

.btn-ok svg {
    width: 15px;
    height: 11px;
}

.btn-close {
    margin-left: 5px;
    border: 1px solid #e8e8e8;
    color: #777;
}

.btn-close svg {
    width: 12px;
    height: 12px;
}

.bc-body {
    height: 224px;
    box-sizing: border-box;
    padding: 8px 15px 0;
    border-bottom: 1px solid #e6e6e6;
}

.field {
    height: 45px;
    display: flex;
    align-items: center;
    justify-content: space-between;
    font-size: 16px;
    box-sizing: border-box;
}

.field label {
    margin-left: -1px;
    padding-bottom: 2px;
}

.select {
    width: 167px;
    height: 40px;
    box-sizing: border-box;
    display: flex;
    align-items: center;
    justify-content: space-between;
    padding: 0 5px 2px;
    border-bottom: 1px solid #dedede;
}

.select svg {
    width: 11px;
    height: 7px;
    color: #666;
}

.faces-head {
    height: 22px;
    margin-top: 10px;
    display: flex;
    align-items: center;
    font-size: 16px;
}

.faces-title {
    margin-left: -1px;
    font-weight: 700;
    color: #444;
}

.faces-count {
    margin-left: 6px;
    color: #777;
}

.clear-list {
    margin-left: auto;
    font-size: 14px;
    color: #0b7fb0;
}

.faces-list {
    height: 72px;
    margin-top: 11px;
    box-sizing: border-box;
    padding: 4px 9px 0 9px;
    background-color: #e8f4fb;
    border: 1px solid #2aaee0;
    border-left-width: 2px;
    font-size: 16px;
    color: #444;
}

.face {
    height: 30px;
    box-sizing: border-box;
    padding-bottom: 2px;
    display: flex;
    align-items: center;
    justify-content: space-between;
}

.face svg {
    width: 20px;
    height: 20px;
    margin-bottom: -2px;
    margin-right: 1px;
}

.bc-foot {
    padding: 10px 0 0 12px;
}

.btn-trash {
    width: 40px;
    height: 40px;
    box-sizing: border-box;
    display: flex;
    align-items: center;
    justify-content: center;
    background-color: #fff;
    border: 1px solid #e8e8e8;
    border-radius: 4px;
}

.btn-trash svg {
    width: 14px;
    height: 16px;
}

/* Viewer */
.viewer {
    width: 842px;
    flex: none;
    position: relative;
    z-index: 1;
    height: 849px;
    margin-top: -11px;
}

.toolbar {
    position: absolute;
    left: 178px;
    top: 15px;
    display: flex;
}

.tool {
    width: 54px;
    height: 48px;
    box-sizing: border-box;
    display: flex;
    align-items: center;
    justify-content: center;
    position: relative;
}

.tool:nth-child(1),
.tool:nth-child(2) {
    width: 55px;
}

.tool:nth-child(7) {
    width: 52px;
}

.tool svg {
    width: 30px;
    height: 30px;
}

.tool.sep::after {
    content: "";
    position: absolute;
    right: 0;
    top: 3px;
    bottom: 3px;
    width: 1px;
    background-color: #ececec;
}

.tool.corner::before {
    content: "";
    position: absolute;
    right: 7px;
    bottom: 7px;
    width: 4px;
    height: 4px;
    border-right: 1px solid #aaa;
    border-bottom: 1px solid #aaa;
}

.tool.on {
    width: 49px;
    margin: 0 2.500px;
    background-color: #fafafa;
    border: 1px solid #bfe0f0;
    border-radius: 5px;
}

.scale {
    position: absolute;
    left: 49px;
    top: 826px;
    width: 281px;
    margin-left: 4px;
    display: flex;
    flex-direction: column;
    align-items: center;
}

.scale-bar {
    width: 100%;
    height: 6px;
    box-sizing: border-box;
    border: 2px solid #444;
    border-top: none;
}

.scale-text {
    margin-top: 6px;
    font-family: "Liberation Sans", sans-serif;
    font-size: 14.5px;
    color: #555;
}

/* Right panel */
.side {
    width: 293px;
    flex: none;
    position: relative;
    z-index: 2;
    box-sizing: border-box;
    background-color: #fff;
    box-shadow: 0 0 2px rgba(0, 0, 0, 0.15);
    font-size: 16px;
    color: #3c3c3c;
}

.mesh-block {
    height: 126px;
    box-sizing: border-box;
    border-bottom: 1px solid #e4e4e4;
    position: relative;
}

.mesh-title {
    height: 44px;
    display: flex;
    align-items: center;
    padding-left: 16px;
    font-weight: 700;
    font-size: 15.5px;
}

.mesh-title svg {
    width: 12px;
    height: 8px;
    margin-right: 12px;
    color: #666;
}

.mesh-model {
    height: 36px;
    box-sizing: border-box;
    padding-bottom: 2px;
    display: flex;
    align-items: center;
    padding-left: 16px;
    font-weight: 700;
    font-size: 16px;
    position: relative;
}

/* small tree lines above the box and before the region */
.mesh-model::before {
    content: "";
    position: absolute;
    left: 22px;
    top: 5px;
    width: 1px;
    height: 6px;
    background-color: #e3e3e3;
}

.mesh-model .box {
    margin-right: 11px;
}

.mesh-region {
    height: 36px;
    box-sizing: border-box;
    padding-bottom: 2px;
    display: flex;
    align-items: center;
    padding-left: 73px;
    gap: 9px;
    font-size: 16px;
    color: #444;
    position: relative;
}

.mesh-region::before {
    content: "";
    position: absolute;
    left: 53px;
    top: -1px;
    width: 5px;
    height: 17px;
    border-left: 1px solid #e3e3e3;
    border-bottom: 1px solid #e3e3e3;
}

.mesh-region svg {
    width: 18px;
    height: 20px;
}

.side-row {
    height: 45px;
    box-sizing: border-box;
    display: flex;
    align-items: center;
    justify-content: space-between;
    padding: 0 15px 2px 10px;
    border-bottom: 1px solid #e4e4e4;
    font-weight: 700;
    font-size: 16.2px;
}

.side-row svg {
    width: 20px;
    height: 20px;
}

.side-toggle {
    height: 45px;
    box-sizing: border-box;
    display: flex;
    align-items: center;
    justify-content: space-between;
    padding: 0 15px 3px;
    font-size: 15px;
    color: #444;
}

.toggle {
    width: 24px;
    height: 10px;
    border-radius: 5px;
    background-color: #eee;
    position: relative;
}

.toggle::before {
    content: "";
    position: absolute;
    left: -6px;
    top: -5px;
    width: 20px;
    height: 20px;
    box-sizing: border-box;
    border-radius: 50%;
    background-color: #fff;
    border: 1px solid #ddd;
    box-shadow: 0 1px 3px rgba(0, 0, 0, 0.3);
}

/* Floating buttons */
.fab-apps {
    position: absolute;
    left: 1861px;
    top: 529px;
    z-index: 3;
    width: 44px;
    height: 44px;
    display: flex;
    align-items: center;
    justify-content: center;
    border-radius: 50%;
    background-color: #fff;
    box-shadow: 0 3px 12px rgba(0, 0, 0, 0.1);
}

.fab-apps svg {
    width: 20px;
    height: 20px;
}

.fab-chat {
    position: absolute;
    left: 1826px;
    top: 569px;
    z-index: 3;
    width: 60px;
    height: 60px;
    border-radius: 50%;
    background-color: #0079aa;
    box-shadow: 0 6px 18px rgba(0, 0, 0, 0.18);
}

.fab-tile {
    position: absolute;
    left: 17px;
    top: 15px;
    width: 26px;
    height: 27px;
    border-radius: 2px;
    background-color: #fff;
}

.fab-bot {
    position: absolute;
    left: 1853px;
    top: 584px;
    z-index: 3;
    width: 58px;
    height: 45px;
    display: flex;
    align-items: center;
    padding-left: 10px;
    box-sizing: border-box;
    border-radius: 23px 0 0 23px;
    background-color: #fff;
}

.fab-bot svg {
    width: 30px;
    height: 30px;
}

/* View cube */
.navcube {
    position: absolute;
    left: 1676px;
    top: 644px;
    z-index: 2;
    width: 236px;
    height: 216px;
}

.cube-top {
    font-family: Lato, sans-serif;
    font-size: 14px;
    fill: #aaa;
    text-anchor: middle;
}

.axis {
    font-family: Lato, sans-serif;
    font-size: 17px;
    font-weight: 700;
    text-anchor: middle;
}

.axis-y { fill: #9ce99c; }
.axis-x { fill: #ff9c9c; }
.axis-z { fill: #a9a9ff; }

/* Windows taskbar */
.taskbar {
    height: 60px;
    margin-top: 3px;
    flex: none;
    display: flex;
    align-items: center;
    box-sizing: border-box;
    border-top: 1px solid #b4b4b4;
    background-color: #d9d9d9;
    background-image:
        linear-gradient(90deg, #d9d9d9 290px, #f5e3ca 450px, #e5dacd 640px, #d9d9d9 720px, #d9d9d9 1530px, #efe3d0 1640px, #f2e6d3 1920px);
    font-family: "Open Sans", sans-serif;
    color: #222;
}

.weather {
    width: 517px;
    flex: none;
    height: 60px;
    position: relative;
    display: flex;
    align-items: center;
    box-sizing: border-box;
    padding-left: 25px;
}

.weather-icon {
    width: 30px;
    height: 30px;
    margin-right: 9px;
}

.weather-badge {
    position: absolute;
    left: 39px;
    top: 7px;
    width: 20px;
    height: 20px;
    border-radius: 50%;
    background-color: #c42b1c;
    color: #fff;
    font-size: 12px;
    line-height: 20px;
    text-align: center;
}

.weather-text {
    display: flex;
    flex-direction: column;
    gap: 2px;
    padding-bottom: 4px;
    font-size: 14.4px;
    line-height: 18px;
}

.weather-text span + span {
    color: #444;
}

.tb-slot {
    width: 55px;
    height: 60px;
    flex: none;
    display: flex;
    align-items: center;
    justify-content: center;
    position: relative;
}

.tb-win {
    width: 29px;
    height: 29px;
}

.tb-icon {
    width: 29px;
    height: 30px;
}

.tb-slot.dot::after {
    content: "";
    position: absolute;
    left: 24px;
    bottom: 5px;
    width: 7px;
    height: 7px;
    border-radius: 50%;
    background-color: #7f7f7f;
}

.tb-slot.edge::before {
    content: "";
    position: absolute;
    left: 4px;
    top: 5px;
    width: 48px;
    height: 50px;
    border-radius: 4px;
    background-color: #efefef;
}

.tb-slot.edge .tb-icon {
    position: relative;
}

.tb-slot.edge::after {
    content: "";
    position: absolute;
    left: 18px;
    bottom: 5px;
    width: 19px;
    height: 4px;
    border-radius: 2px;
    background-color: #0a6fc9;
}

.wa-badge {
    position: absolute;
    left: 27px;
    top: 7px;
    width: 24px;
    height: 24px;
    border-radius: 50%;
    background-color: #0a78d4;
    color: #fff;
    font-size: 13px;
    line-height: 24px;
    text-align: center;
}

.zoom-word {
    font-family: "Liberation Sans", sans-serif;
    font-size: 8px;
    font-weight: 700;
    fill: #fff;
    text-anchor: middle;
}

.tb-search {
    width: 273px;
    height: 38px;
    margin-left: 5px;
    margin-right: 3px;
    box-sizing: border-box;
    flex: none;
    display: flex;
    align-items: center;
    padding-left: 16px;
    background-color: #f5f2ee;
    border: 1px solid #d0ccc6;
    border-radius: 19px;
    font-size: 16.8px;
    color: #444;
}

.tb-glass {
    width: 18px;
    height: 20px;
    margin-right: 10px;
}

.tb-sax {
    width: 50px;
    height: 30px;
    margin-left: auto;
    margin-right: 10px;
}

.tray {
    margin-left: auto;
    padding-right: 24px;
    display: flex;
    align-items: center;
    font-size: 14px;
}

.tray-chev {
    width: 16px;
    height: 10px;
}

.tray-lang {
    width: 40px;
    margin-left: 21px;
    display: flex;
    flex-direction: column;
    align-items: center;
    line-height: 20px;
}

.tray-wifi {
    width: 20px;
    height: 18px;
    margin-left: 16px;
}

.tray-vol {
    width: 20px;
    height: 20px;
    margin-left: 11px;
}

.tray-clock {
    width: 80px;
    margin-left: 17px;
    display: flex;
    flex-direction: column;
    align-items: flex-end;
    line-height: 20px;
    white-space: nowrap;
}

.tray-bell {
    width: 20px;
    height: 22px;
    margin-left: 11px;
}
```
